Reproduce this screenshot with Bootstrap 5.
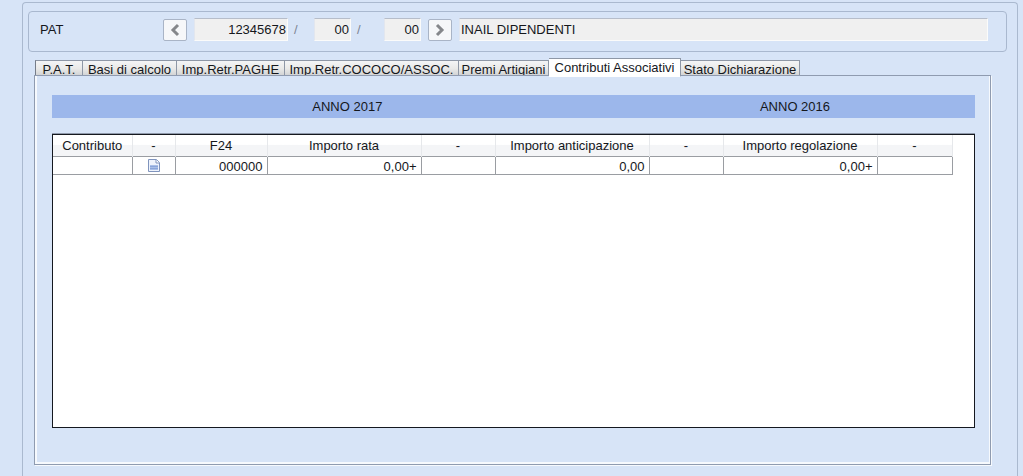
<!DOCTYPE html>
<html lang="it">
<head>
<meta charset="utf-8">
<meta name="viewport" content="width=device-width, initial-scale=1">
<title>Contributi Associativi</title>
<link href="https://cdn.jsdelivr.net/npm/bootstrap@5.3.0/dist/css/bootstrap.min.css" rel="stylesheet">
<style>
body { background: #d7e4f7; color: #15171c; font: 13px/16px "Liberation Sans", Arial, sans-serif; }
.app { min-height: 100vh; padding: 2px 5px 0 22px; }
.frame { border: 1px solid #aab9cf; border-bottom: 0; border-radius: 4px 4px 0 0; padding: 8px 10px 11px 5px; }
.group { border: 1px solid #a9b8cf; border-radius: 4px; padding: 6px 18px 10px 11px; }
.group-label { width: 123px; }
.field { height: 23px; min-width: 0; border: 1px solid #fbfbfa; border-top-color: #b6bdca; border-left-color: #e2e6ee; background: #f0f0f0; color: #15171c; padding: 0 1px; border-radius: 0; line-height: 20px; }
.code-long { width: 94px; }
.code-short { width: 37px; }
.gap-start { margin-left: 7px; }
.slash { width: 26px; padding-left: 6px; color: #7d8594; }
.step { width: 24px; height: 22px; border: 1px solid #a9b4c6; border-radius: 2px; background: #f6f7f9; padding: 0; margin-top: 1px; }
.tabs { margin: 6px 0 -1px 7px; border: 0; }
.tabs .nav-link { height: 16px; margin: 0; border: 1px solid #8e97a6; border-left-color: #767d89; border-radius: 0; background: linear-gradient(#f4f5f6, #e9e9e8 55%, #d3d4d5); color: #15171c; padding: 1px 0 0; overflow: hidden; white-space: nowrap; line-height: 16px; text-align: center; }
.tabs .nav-item + .nav-item .nav-link { border-left-width: 0; }
.tabs .nav-link.active { height: 19px; background: #fff; color: #15171c; border-color: #8e97a6; border-bottom-color: #fff; margin-bottom: -1px; position: relative; }
.w-pat { width: 48px; }
.w-basi { width: 94px; }
.w-paghe { width: 108px; }
.w-assoc { width: 174px; }
.w-premi { width: 90px; }
.w-contr { width: 132px; }
.w-stato { width: 119px; }
.panel { margin: 0 16px 0 6px; border: 1px solid #8f9bb0; box-shadow: inset 2px 0 #f6f9fd, inset -1px -2px #f6f9fd, 1px 1px #f6f9fd; padding: 19px 15px 36px 17px; min-height: calc(100vh - 86px); }
.years { background: #9cb7eb; height: 23px; padding-top: 4px; }
.year-a { width: 64%; }
.year-b { width: 33%; }
.listing { margin-top: 16px; border: 1px solid #15181f; background: #fff; box-shadow: 0 -1px #8f99aa; }
.grid { width: 899px; table-layout: fixed; border-collapse: collapse; }
.grid th { height: 21px; padding: 2px 0 0; font-weight: 400; text-align: center; background: linear-gradient(#fff 45%, #f4f5f7 50%, #f4f5f7); border-right: 1px solid #e6e8eb; }
.grid td { height: 18px; padding: 2px 4px 0 0; line-height: 15px; text-align: right; border: 1px solid #9a9da2; }
.grid td:first-child { border-left: 0; }
.grid .cell-icon { padding: 0; text-align: center; }
.doc { border: 0; background: none; padding: 0; display: block; margin: 0 auto; height: 14px; line-height: 0; }
.doc svg, .step svg { display: block; margin: auto; }
</style>
<script src="https://cdn.jsdelivr.net/npm/bootstrap@5.3.0/dist/js/bootstrap.bundle.min.js"></script>
</head>
<body>
<main class="app d-flex flex-column">
  <div class="frame flex-grow-1 d-flex flex-column">
    <form class="group d-flex align-items-start">
      <label class="group-label pt-1" for="pat">PAT</label>
      <button class="step" type="button" aria-label="Precedente"><svg width="12" height="14" viewBox="0 0 12 14"><path d="M9 2 4 7l5 5" fill="none" stroke="#85878b" stroke-width="3"/></svg></button>
      <input class="field code-long text-end gap-start" id="pat" value="12345678" readonly>
      <span class="slash pt-1">/</span>
      <input class="field code-short text-end" aria-label="Codice 1" value="00" readonly>
      <span class="slash pt-1">/</span>
      <input class="field code-short text-end gap-start" aria-label="Codice 2" value="00" readonly>
      <button class="step gap-start" type="button" aria-label="Successivo"><svg width="12" height="14" viewBox="0 0 12 14"><path d="m3 2 5 5-5 5" fill="none" stroke="#85878b" stroke-width="3"/></svg></button>
      <input class="field flex-grow-1 gap-start" aria-label="Descrizione" value="INAIL DIPENDENTI" readonly>
    </form>

    <ul class="nav nav-tabs tabs flex-nowrap align-items-end" role="tablist">
      <li class="nav-item"><button class="nav-link w-pat" type="button" role="tab">P.A.T.</button></li>
      <li class="nav-item"><button class="nav-link w-basi" type="button" role="tab">Basi di calcolo</button></li>
      <li class="nav-item"><button class="nav-link w-paghe" type="button" role="tab">Imp.Retr.PAGHE</button></li>
      <li class="nav-item"><button class="nav-link w-assoc" type="button" role="tab">Imp.Retr.COCOCO/ASSOC.</button></li>
      <li class="nav-item"><button class="nav-link w-premi" type="button" role="tab">Premi Artigiani</button></li>
      <li class="nav-item"><button class="nav-link active w-contr" type="button" role="tab" aria-selected="true">Contributi Associativi</button></li>
      <li class="nav-item"><button class="nav-link w-stato" type="button" role="tab">Stato Dichiarazione</button></li>
    </ul>

    <section class="panel flex-grow-1 d-flex flex-column">
      <div class="years d-flex text-center">
        <div class="year-a">ANNO 2017</div>
        <div class="year-b">ANNO 2016</div>
      </div>
      <div class="listing flex-grow-1">
        <table class="grid">
          <colgroup><col style="width:79px"><col style="width:43px"><col style="width:92px"><col style="width:154px"><col style="width:74px"><col style="width:154px"><col style="width:74px"><col style="width:154px"><col style="width:75px"></colgroup>
          <thead>
            <tr><th>Contributo</th><th>-</th><th>F24</th><th>Importo rata</th><th>-</th><th>Importo anticipazione</th><th>-</th><th>Importo regolazione</th><th>-</th></tr>
          </thead>
          <tbody>
            <tr>
              <td></td>
              <td class="cell-icon"><button class="doc" type="button" aria-label="Dettaglio"><svg width="12" height="13" viewBox="0 0 12 13"><path d="M.5 .5h8l3 3v9H.5z" fill="#eef3fc" stroke="#8094bd"/><path d="M2 6h8v5H2z" fill="#a9bfe8"/><path d="M8 .5v3.500h3.500" fill="#fff" stroke="#8094bd"/><path d="M2 7.500h8M2 9.500h8" stroke="#8aa5da"/></svg></button></td>
              <td>000000</td><td>0,00+</td><td></td><td>0,00</td><td></td><td>0,00+</td><td></td>
            </tr>
          </tbody>
        </table>
      </div>
    </section>
  </div>
</main>
</body>
</html>
